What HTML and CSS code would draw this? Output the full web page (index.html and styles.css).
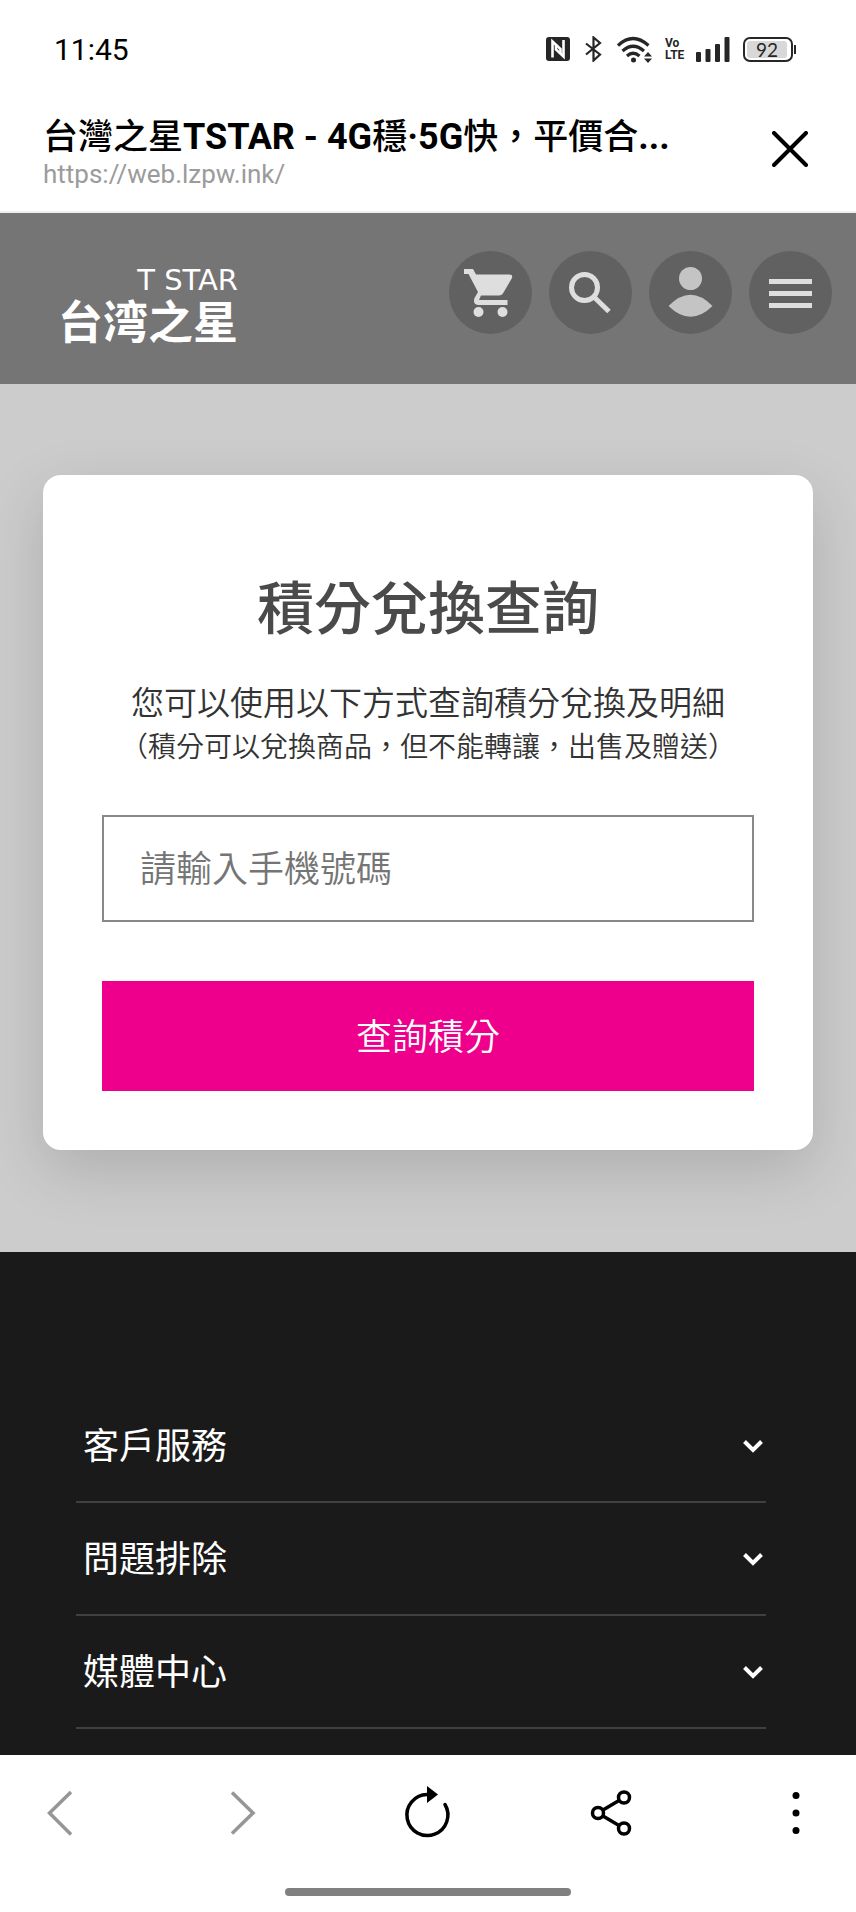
FILE: index.html
```html
<!DOCTYPE html>
<html lang="zh-Hant">
  <head>
    <meta charset="UTF-8" />
    <meta name="viewport" content="width=device-width, initial-scale=1.0" />
    <title>台灣之星TSTAR</title>
    <link rel="stylesheet" href="styles.css">
  </head>
  <body>
    <div class="status-bar">
      <span class="clock">11:45</span>
      <div class="status-icons">
        <svg width="24" height="24" viewBox="0 0 24 24">
          <rect width="24" height="24" rx="3" fill="#262626" />
          <path d="M6.500 20.500V4.500L14.500 12V17" fill="none" stroke="#fff" stroke-width="2.600" />
          <path d="M17.500 3V19.500L10 12.500V7.500" fill="none" stroke="#fff" stroke-width="2.600" />
        </svg>
        <svg width="21" height="26" viewBox="-2 0 21 26" fill="none" stroke="#262626" stroke-width="2.200">
          <path d="M1 7.500L15 18.500L8.500 24.500V1.500L15 7L1 18.500" />
        </svg>
        <svg width="35" height="27" viewBox="0 0 35 27" fill="none" stroke="#262626" stroke-width="3.200">
          <path d="M1 9.500Q16 -4.500 31.500 9.500" />
          <path d="M5.500 15Q16 5.500 27 15" />
          <path d="M10 20Q16 14.500 22.500 20" />
          <circle cx="16.500" cy="24" r="2.500" fill="#262626" stroke="none" />
          <path d="M31 16L35 20.500H27ZM27 22.500H35L31 27Z" fill="#262626" stroke="none" />
        </svg>
        <span class="volte">Vo<br />LTE</span>
        <svg width="34" height="25" viewBox="0 0 34 25" fill="#262626">
          <rect x="0" y="15" width="5" height="10" rx="1" />
          <rect x="9.500" y="12" width="5" height="13" rx="1" />
          <rect x="19" y="7" width="5" height="18" rx="1" />
          <rect x="28.500" y="0" width="5" height="25" rx="1" />
        </svg>
        <div class="battery"><span class="battery-level">92</span></div>
      </div>
    </div>

    <div class="browser-bar">
      <div class="page-info">
        <div class="page-title"><span class="zh">台灣之星</span>TSTAR - 4G<span class="zh">穩</span>·5G<span class="zh">快，平價合</span>...</div>
        <div class="page-url">https://web.lzpw.ink/</div>
      </div>
      <button class="close-button" aria-label="關閉">
        <svg width="36" height="36" viewBox="0 0 36 36" fill="none" stroke="#000" stroke-width="4" stroke-linecap="round">
          <path d="M2 2L34 34M34 2L2 34" />
        </svg>
      </button>
    </div>

    <header class="site-header">
      <a class="logo" href="#">
        <span class="logo-en">T STAR</span>
        <span class="logo-zh">台湾之星</span>
      </a>
      <nav class="header-actions">
        <button class="round-button" aria-label="購物車">
          <svg width="83" height="83" viewBox="0 0 83 83" fill="#dedede">
            <path d="M15 18H24L27 23.500H60.500Q64 23.500 63 27L54.500 41.500Q53 44.500 50 44.500H32L30 49H58.500V54H29Q23.500 53.500 25.500 47L29 41L19.500 23H15Z" />
            <circle cx="29.500" cy="61" r="5" />
            <circle cx="53.500" cy="61" r="5" />
          </svg>
        </button>
        <button class="round-button" aria-label="搜尋">
          <svg width="83" height="83" viewBox="0 0 83 83" fill="none" stroke="#dedede" stroke-width="5">
            <circle cx="35.500" cy="36.500" r="13" />
            <path d="M45 46L60 60.500" />
          </svg>
        </button>
        <button class="round-button" aria-label="會員">
          <svg width="83" height="83" viewBox="0 0 83 83" fill="#c4c4c4">
            <circle cx="41.500" cy="27.500" r="11.500" />
            <path d="M19.500 55Q41.500 32.500 63.500 55Q41.500 76.500 19.500 55Z" />
          </svg>
        </button>
        <button class="round-button" aria-label="選單">
          <svg width="83" height="83" viewBox="0 0 83 83" fill="#dedede">
            <rect x="20" y="28" width="43" height="5" />
            <rect x="20" y="40" width="43" height="5" />
            <rect x="20" y="52" width="43" height="5" />
          </svg>
        </button>
      </nav>
    </header>

    <main class="content">
      <form class="card">
        <h1 class="card-title">積分兌換查詢</h1>
        <p class="card-text">您可以使用以下方式查詢積分兌換及明細</p>
        <p class="card-note">（積分可以兌換商品，但不能轉讓，出售及贈送）</p>
        <input class="phone-input" type="tel" aria-label="手機號碼" placeholder="請輸入手機號碼" />
        <button class="submit-button" type="button">查詢積分</button>
      </form>
    </main>

    <footer class="site-footer">
      <button class="footer-item">
        客戶服務
        <svg width="20" height="13" viewBox="0 0 20 13" fill="none" stroke="#fff" stroke-width="4"><path d="M1.500 1.500L10 10L18.500 1.500" /></svg>
      </button>
      <button class="footer-item">
        問題排除
        <svg width="20" height="13" viewBox="0 0 20 13" fill="none" stroke="#fff" stroke-width="4"><path d="M1.500 1.500L10 10L18.500 1.500" /></svg>
      </button>
      <button class="footer-item">
        媒體中心
        <svg width="20" height="13" viewBox="0 0 20 13" fill="none" stroke="#fff" stroke-width="4"><path d="M1.500 1.500L10 10L18.500 1.500" /></svg>
      </button>
    </footer>

    <div class="toolbar">
      <nav class="toolbar-buttons">
        <button class="tool-button" aria-label="上一頁">
          <svg width="56" height="56" viewBox="0 0 56 56" fill="none" stroke="#969696" stroke-width="3.500">
            <path d="M39 7L17.500 28L39 49.500" />
          </svg>
        </button>
        <button class="tool-button" aria-label="下一頁">
          <svg width="56" height="56" viewBox="0 0 56 56" fill="none" stroke="#969696" stroke-width="3.500">
            <path d="M16 7.500L37 28L16 48.500" />
          </svg>
        </button>
        <button class="tool-button" aria-label="重新整理">
          <svg width="56" height="56" viewBox="0 0 56 56" fill="none" stroke="#000" stroke-width="3.500">
            <path d="M27 9.500A20.500 20.500 0 1 0 45 19.500" stroke-linecap="round" />
            <path d="M27 1L38 9.500L27 18Z" fill="#000" stroke="none" />
          </svg>
        </button>
        <button class="tool-button" aria-label="分享">
          <svg width="56" height="56" viewBox="0 0 56 56" fill="none" stroke="#000" stroke-width="3.500">
            <circle cx="14" cy="28" r="5.500" />
            <circle cx="40" cy="12.500" r="5.500" />
            <circle cx="40" cy="43.500" r="5.500" />
            <path d="M19 25L35 15.500M19 31L35 40.500" />
          </svg>
        </button>
        <button class="tool-button" aria-label="更多">
          <svg width="56" height="56" viewBox="0 0 56 56" fill="#000">
            <circle cx="28" cy="10.500" r="3.500" />
            <circle cx="28" cy="28" r="3.500" />
            <circle cx="28" cy="45.500" r="3.500" />
          </svg>
        </button>
      </nav>
      <div class="home-indicator"></div>
    </div>
  </body>
</html>
```
FILE: styles.css
```css
:root {
  --brand-color: #ee008c;
  --header-color: #757575;
  --footer-color: #1a1a1a;
  --text-color: #333333;
}

* {
  margin: 0;
  padding: 0;
  box-sizing: border-box;
}

body {
  font-family: Roboto, "Noto Sans CJK TC", sans-serif;
  background-color: #ffffff;
  color: var(--text-color);
}

button {
  border: none;
  background: none;
  font-family: inherit;
  cursor: pointer;
}

svg {
  display: block;
  flex-shrink: 0;
}

/* Status bar */
.status-bar {
  display: flex;
  justify-content: space-between;
  align-items: center;
  height: 100px;
  padding: 0 60px 2px 54px;
}

.clock {
  font-size: 30px;
  color: #000000;
}

.status-icons {
  display: flex;
  align-items: center;
  gap: 13px;
  color: #262626;
}

.volte {
  width: 18px;
  font-size: 12px;
  font-weight: 700;
  line-height: 12px;
}

.battery {
  position: relative;
  width: 50px;
  height: 25px;
  margin-right: 3px;
  padding: 2px;
  border: 2px solid #262626;
  border-radius: 7px;
}

.battery::after {
  content: "";
  position: absolute;
  top: 6px;
  right: -5px;
  width: 2px;
  height: 9px;
  background-color: #262626;
}

.battery-level {
  display: block;
  width: 40px;
  border-radius: 3px;
  background-color: #d8d8d8;
  font-family: Lato, sans-serif;
  font-size: 19px;
  line-height: 17px;
  text-align: center;
}

/* Browser title bar */
.browser-bar {
  display: flex;
  justify-content: space-between;
  align-items: center;
  height: 113px;
  padding: 0 48px 14px 43px;
  border-bottom: 2px solid #eeeeee;
}

.page-info {
  min-width: 0;
  padding-top: 8px;
}

.page-title {
  font-size: 36px;
  font-weight: 700;
  line-height: 42px;
  color: #000000;
  white-space: nowrap;
}

.page-title .zh {
  font-size: 35px;
  font-weight: 500;
}

.page-url {
  font-size: 26px;
  line-height: 30px;
  color: #9b9b9b;
}

/* Site header */
.site-header {
  display: flex;
  justify-content: space-between;
  align-items: flex-start;
  padding: 38px 24px 39px 58px;
  background-color: var(--header-color);
}

.logo {
  display: flex;
  flex-direction: column;
  align-items: flex-end;
  padding-top: 14px;
  color: #ffffff;
  text-decoration: none;
}

.logo-en {
  font-family: "DejaVu Sans", sans-serif;
  font-size: 29px;
  line-height: 30px;
}

.logo-zh {
  font-family: "Noto Sans CJK SC", sans-serif;
  font-size: 45px;
  font-weight: 700;
  line-height: 50px;
}

.header-actions {
  display: flex;
  gap: 17px;
}

.round-button {
  height: 83px;
  border-radius: 50%;
  background-color: #616161;
}

/* Points query card */
.content {
  padding: 91px 43px 102px;
  background-color: #cccccc;
}

.card {
  display: flex;
  flex-direction: column;
  padding: 93px 59px 59px;
  border-radius: 18px;
  background-color: #ffffff;
  box-shadow: 0 20px 60px rgba(0, 0, 0, 0.15);
  text-align: center;
}

.card-title {
  font-size: 57px;
  font-weight: 500;
  line-height: 84px;
  color: #4a4a4a;
}

.card-text {
  margin-top: 30px;
  font-size: 33px;
  font-weight: 350;
  line-height: 44px;
}

.card-note {
  font-size: 28px;
  font-weight: 350;
  line-height: 44px;
}

.phone-input {
  width: 100%;
  height: 107px;
  margin-top: 45px;
  padding: 3px 36px 0;
  border: 2px solid #888888;
  font-family: inherit;
  font-size: 36px;
  font-weight: 350;
}

.phone-input::placeholder {
  color: #757575;
}

.submit-button {
  height: 110px;
  margin-top: 59px;
  padding-top: 3px;
  background-color: var(--brand-color);
  color: #ffffff;
  font-size: 36px;
  font-weight: 350;
  line-height: 44px;
}

/* Footer menu */
.site-footer {
  padding: 138px 90px 26px 76px;
  background-color: var(--footer-color);
}

.footer-item {
  display: flex;
  justify-content: space-between;
  align-items: center;
  width: 100%;
  height: 113px;
  padding: 2px 3px 0 7px;
  border-bottom: 2px solid #404040;
  color: #ffffff;
  font-size: 36px;
  line-height: 44px;
}

/* Browser toolbar */
.toolbar {
  padding: 30px 32px 16px;
}

.toolbar-buttons {
  display: flex;
  justify-content: space-between;
}

.home-indicator {
  width: 36%;
  height: 8px;
  margin: 47px auto 0;
  border-radius: 4px;
  background-color: #808080;
}
```
